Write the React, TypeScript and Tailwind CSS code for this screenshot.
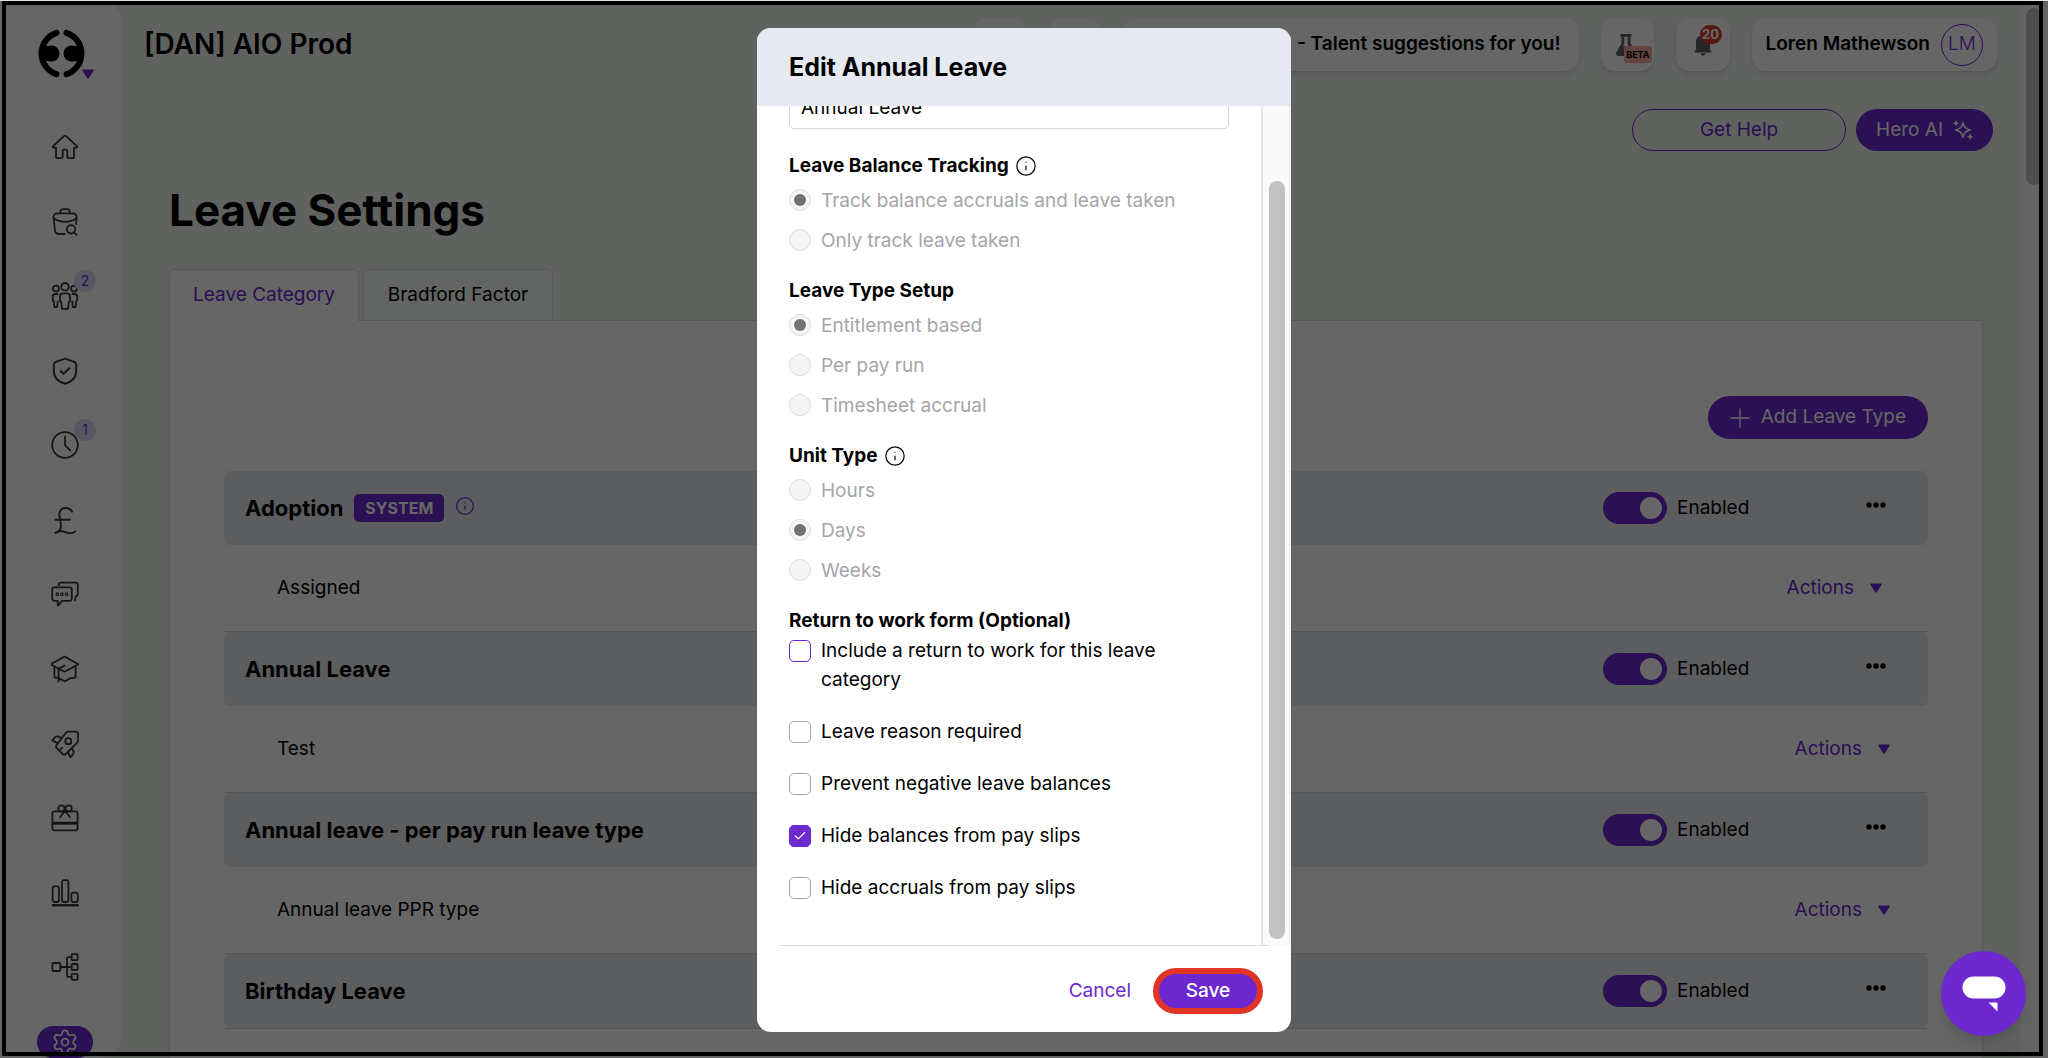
import type { ReactNode } from "react";
import { Check, Info, Settings } from "lucide-react";

const Icon = ({ children }: { children: ReactNode }) => (
  <svg
    className="h-7 w-7"
    viewBox="0 0 28 28"
    fill="none"
    stroke="currentColor"
    strokeWidth="1.8"
    strokeLinecap="round"
    strokeLinejoin="round"
    aria-hidden="true"
  >
    {children}
  </svg>
);

const navItems: { label: string; badge?: string; icon: ReactNode }[] = [
  {
    label: "Home",
    icon: (
      <path d="M13 3.2 2.2 13c-.7.7-.3 1.7.6 1.7H5v8.7c0 1 .7 1.7 1.7 1.7h3.6c.8 0 1.4-.6 1.4-1.4v-5.3c0-1 .7-1.7 1.6-1.7h1.4c.9 0 1.6.7 1.6 1.7v5.3c0 .8.6 1.4 1.4 1.4h3.6c1 0 1.7-.7 1.7-1.7v-8.7h2.2c.9 0 1.3-1 .6-1.7L15 3.2a1.5 1.5 0 0 0-2 0z" />
    ),
  },
  {
    label: "Hiring",
    icon: (
      <>
        <path d="M9.5 5.4V3.6c0-1.4 1-2.4 2.4-2.4h4.4c1.4 0 2.4 1 2.4 2.4v1.8" />
        <path d="M13.5 26H7.8c-2.2 0-3.6-1.4-3.8-3.6L2.6 9.7C2.4 7 3.8 5.4 6.4 5.4h15.4c2.6 0 4 1.6 3.8 4.3L25 16" />
        <path d="M2.8 10.6c6.6 4.4 16 4.4 22.6 0" />
        <circle cx="20" cy="21.3" r="4.2" />
        <path d="m23 24.4 2.6 2.4" />
      </>
    ),
  },
  {
    label: "People",
    badge: "2",
    icon: (
      <>
        <circle cx="14" cy="4.8" r="3.8" />
        <circle cx="5" cy="6.6" r="3" />
        <circle cx="23" cy="6.6" r="3" />
        <path d="M11 26.8 10.2 20 9 19v-4.4c0-2 1.4-3.2 3.2-3.2h3.6c1.8 0 3.2 1.2 3.2 3.2V19l-1.2 1-.8 6.8z" />
        <path d="M6.5 12H4.4c-1.7 0-2.7 1-2.7 2.6l.1 3.600 1 1.200.6 5.600h2.800l.6-5.600" />
        <path d="M21.500 12h2.100c1.700 0 2.700 1 2.700 2.600l-.1 3.600-1 1.200-.6 5.600h-2.800l-.6-5.600" />
      </>
    ),
  },
  {
    label: "Compliance",
    icon: (
      <g strokeWidth="2">
        <path d="M14 1.600 22.600 4.600c1.600.6 2.600 1.800 2.600 3.400v6c0 6.400-4.600 10.800-11.200 12.800C7.400 24.800 2.800 20.400 2.800 14V8c0-1.600 1-2.800 2.600-3.400z" />
        <path d="m9.600 14 3 2.800 5.800-5.600" />
      </g>
    ),
  },
  {
    label: "Time",
    badge: "1",
    icon: (
      <>
        <circle cx="14" cy="14" r="12.800" />
        <path d="M14 5.500V14l5.200 5.400" />
      </>
    ),
  },
  {
    label: "Payroll",
    icon: (
      <path
        strokeWidth="1.900"
        d="M21 5.600c-1.400-2.400-3.600-3.600-6.400-3.600-4.200 0-6.800 3-6.200 7.200l1.400 8.600c.5 3.200-.6 6.400-3.400 8.200-1 .7-1.600.8-2 .6 4.800-2 6.800-1.400 10.600-.2 3.800 1.200 7 1 9.200-1M4.400 13.800h14.400"
      />
    ),
  },
  {
    label: "Messages",
    icon: (
      <>
        <path d="M3.400 7.400h15.200c1.300 0 2.200.9 2.200 2.200v9c0 1.300-.9 2.200-2.200 2.200H11l-4.200 4.800v-4.800H3.400c-1.300 0-2.200-.9-2.200-2.200v-9c0-1.300.9-2.200 2.200-2.200z" />
        <path d="M7.800 5.400V4.600c0-1.200.9-2 2-2h15c1.200 0 2 .9 2 2v9.200c0 1.200-.8 2.200-2 2.400l-.9 4.200" />
        <circle cx="6.400" cy="14.200" r="1.300" strokeWidth="1.200" />
        <circle cx="11" cy="14.200" r="1.300" strokeWidth="1.200" />
        <circle cx="15.600" cy="14.200" r="1.300" strokeWidth="1.200" />
      </>
    ),
  },
  {
    label: "Learning",
    icon: (
      <>
        <path d="M13.600 1.600 27.400 9.200 13.600 16.800-.4 9.200z" />
        <path d="M3.400 12v10.400l4 .6M7.400 23l6.400 3.400 4.800-3 6-.8V12M13.600 10.600l-6 3V26.400" />
      </>
    ),
  },
  {
    label: "Goals",
    icon: (
      <>
        <path d="M17 1.700h7.600c1.500 0 2.400.9 2.400 2.400v6.400c0 1-.3 1.700-1 2.400L14.800 24c-1 1-2.200 1-3.200 0L6 18.400c-1.200-1.200-1.200-2.600-.2-3.800L15 2.800c.5-.7 1.200-1.100 2-1.100z" />
        <path d="M10.400 8.200C7.600 5.800 5 5.800 3.600 7.600L1.400 10.400l5 2.600" />
        <path d="M21 18.400c1.800 2.200 2 4.400.8 6L19.400 27.400 16.800 22" />
        <circle cx="17.300" cy="11.200" r="3" />
        <path d="m8.600 20.200 2.600-2.600" />
      </>
    ),
  },
  {
    label: "Benefits",
    icon: (
      <>
        <rect x="1.400" y="7.400" width="25.200" height="19" rx="2.200" />
        <path strokeWidth="3" strokeLinecap="butt" d="M1.400 19.200h25.200" />
        <path d="M14 6.800 9 13.200M14 6.800l5 6.400" />
        <circle cx="10.400" cy="4.400" r="3.100" />
        <circle cx="17.600" cy="4.400" r="3.100" />
      </>
    ),
  },
  {
    label: "Reports",
    icon: (
      <>
        <rect x="1.600" y="7.400" width="6.400" height="15.600" rx="2" />
        <rect x="11" y="1.200" width="6.400" height="21.800" rx="2" />
        <rect x="20.400" y="13.600" width="6.400" height="9.400" rx="2" />
        <path strokeWidth="2.600" d="M2 26.200h24.600" />
      </>
    ),
  },
  {
    label: "Organisation",
    icon: (
      <>
        <rect x="1.400" y="10" width="8" height="8" rx="1" />
        <rect x="20.600" y="1.200" width="6" height="6" rx="1" />
        <rect x="20.600" y="11" width="6" height="6" rx="1" />
        <rect x="20.600" y="20.800" width="6" height="6" rx="1" />
        <path d="M9.400 14h11.200M20.600 4.200H17c-.6 0-1 .4-1 1v17.600c0 .6.4 1 1 1h3.600" />
      </>
    ),
  },
];

const leaveCategories = [
  { name: "Adoption", system: true, type: "Assigned" },
  { name: "Annual Leave", system: false, type: "Test" },
  {
    name: "Annual leave - per pay run leave type",
    system: false,
    type: "Annual leave PPR type",
  },
  { name: "Birthday Leave", system: false, type: "" },
];

const radioGroups = [
  {
    name: "tracking",
    title: "Leave Balance Tracking",
    info: true,
    selected: "Track balance accruals and leave taken",
    options: ["Track balance accruals and leave taken", "Only track leave taken"],
  },
  {
    name: "setup",
    title: "Leave Type Setup",
    info: false,
    selected: "Entitlement based",
    options: ["Entitlement based", "Per pay run", "Timesheet accrual"],
  },
  {
    name: "unit",
    title: "Unit Type",
    info: true,
    selected: "Days",
    options: ["Hours", "Days", "Weeks"],
  },
];

const checkboxes = [
  { label: "Include a return to work for this leave category", highlighted: true },
  { label: "Leave reason required" },
  { label: "Prevent negative leave balances" },
  { label: "Hide balances from pay slips", checked: true },
  { label: "Hide accruals from pay slips" },
];

const Caret = () => (
  <svg className="h-[10px] w-3" viewBox="0 0 12 10" aria-hidden="true">
    <path
      d="M1 .5h10c.7 0 1 .6.6 1.200L6.800 9.200c-.4.600-1.200.600-1.600 0L.4 1.700C0 1.100.3.500 1 .500z"
      fill="#6d28d0"
    />
  </svg>
);

const Sidebar = () => (
  <aside className="flex w-[122px] shrink-0 flex-col rounded-r-[24px] bg-white">
    <button
      type="button"
      aria-label="Switch organisation"
      className="mt-[29px] ml-[37px] flex w-14 items-end"
    >
      <svg className="h-[50px] w-[50px] shrink-0" viewBox="0 0 50 50" aria-hidden="true">
        <g fill="none" stroke="#000" strokeWidth="6" strokeLinecap="round">
          <path d="M19.500 3.800a21.800 21.800 0 0 0 0 41.400" />
          <path d="M29.500 3.800a21.800 21.800 0 0 1 0 41.400" />
        </g>
        <circle cx="14.500" cy="24.500" r="8" />
        <circle cx="34.500" cy="24.500" r="8" />
        <path d="M5 12c1 4.500 4 6 9.500 4.500v16C9 31 6 32.500 5 37c-3.400-8-3.400-17 0-25zM44 12c-1 4.500-4 6-9.500 4.500v16C40 31 43 32.500 44 37c3.400-8 3.400-17 0-25z" />
      </svg>
      <span className="-ml-[5px]">
        <Caret />
      </span>
    </button>
    <nav className="mt-[52px] flex flex-1 flex-col items-center justify-between pl-2 text-[#38383a]">
      {navItems.map((item) => (
        <a
          key={item.label}
          href="#"
          aria-label={item.label}
          className="relative flex h-8 w-14 items-center justify-center"
        >
          <Icon>{item.icon}</Icon>
          {item.badge && (
            <span className="absolute -top-[10px] -right-[3px] flex h-[22px] w-[22px] items-center justify-center rounded-full bg-[#e2d8f4] text-sm text-[#6d28d0]">
              {item.badge}
            </span>
          )}
        </a>
      ))}
      <a
        href="#"
        aria-label="Settings"
        className="flex h-8 w-14 items-center justify-center rounded-full bg-[#6d28d0] text-white"
      >
        <Settings className="h-7 w-7" strokeWidth={1.5} />
      </a>
    </nav>
  </aside>
);

const TopBar = () => (
  <header className="flex items-start justify-between pr-[22px]">
    <h2 className="pt-[6px] text-[28px] leading-10 font-semibold">[DAN] AIO Prod</h2>
    <div className="flex h-[53px] gap-[22px] [&>*]:rounded-[14px] [&>*]:bg-white [&>*]:shadow-md">
      <button type="button" aria-label="Search" className="w-[53px]" />
      <button type="button" aria-label="Shortcuts" className="w-[53px]" />
      <a
        href="#"
        className="flex w-[456px] items-center justify-end pr-[18px] text-[19px] font-semibold"
      >
        - Talent suggestions for you!
      </a>
      <button
        type="button"
        aria-label="Labs"
        className="relative flex w-[53px] items-center pl-[14px]"
      >
        <svg className="h-[22px] w-[22px]" viewBox="0 0 22 22" fill="#5c5f66" aria-hidden="true">
          <path
            fillRule="evenodd"
            d="M5.500 0h11v2.800h-1v6.400l5 8.800c1 2-.2 4-2.200 4H3.700c-2 0-3.200-2-2.200-4l5-8.800V2.800h-1zM9.300 2.800V10L8 12.400h6L12.700 10V2.800z"
          />
        </svg>
        <span className="absolute right-[2px] bottom-2 rounded-[3px] bg-[#f5aa9c] px-[2px] text-[9px] leading-[17px] font-bold">
          BETA
        </span>
      </button>
      <button
        type="button"
        aria-label="Notifications"
        className="relative flex w-[54px] items-center justify-center"
      >
        <svg className="h-[22px] w-5" viewBox="0 0 20 22" fill="#5c5f66" aria-hidden="true">
          <path d="M10 0c.8 0 1.300.6 1.300 1.300C15 2 17 4.800 17 8v7.500c0 .7 1 1 1.200 1.600v1.400H1.800v-1.400C2 16.500 3 16.200 3 15.500V8c0-3.200 2-6 5.700-6.700C8.700.6 9.200 0 10 0zM7.600 19.300h4.800a2.400 2.400 0 0 1-4.800 0z" />
        </svg>
        <span className="absolute top-[7px] right-2 flex h-[19px] w-[22px] items-center justify-center rounded-full bg-[#d9412a] text-[13px] font-bold text-white">
          20
        </span>
      </button>
      <button
        type="button"
        className="flex items-center gap-[11px] px-[14px] text-[19px] font-semibold"
      >
        Loren Mathewson
        <span className="flex h-[42px] w-[42px] items-center justify-center rounded-full border border-[#6d28d0] font-light text-[#6d28d0]">
          LM
        </span>
      </button>
    </div>
  </header>
);

const LeaveCategoryRow = ({
  name,
  system,
  type,
}: {
  name: string;
  system: boolean;
  type: string;
}) => (
  <section className="border-b border-[#d0d5d8]">
    <div className="flex h-[74px] items-center rounded-md bg-[#e6e9ee] pr-[42px] pl-[21px]">
      <h3 className="text-[22px] font-bold">{name}</h3>
      {system && (
        <>
          <span className="ml-[11px] rounded-[5px] bg-[#6d28d0] px-[11px] text-base leading-7 font-bold text-white">
            SYSTEM
          </span>
          <Info className="mb-1 ml-[11px] h-5 w-5 text-[#6d28d0]" strokeWidth={1.5} />
        </>
      )}
      <label className="ml-auto flex w-[263px] items-center gap-[10px] text-[19px]">
        <input
          type="checkbox"
          role="switch"
          defaultChecked
          className="h-8 w-16 appearance-none rounded-full bg-gray-400 p-[5px] before:block before:h-[22px] before:w-[22px] before:rounded-full before:bg-white checked:bg-[#6d28d0] checked:before:ml-8"
        />
        Enabled
      </label>
      <button type="button" aria-label={`More options for ${name}`} className="mb-[6px]">
        <svg className="h-[6px] w-5" viewBox="0 0 20 6" aria-hidden="true">
          <circle cx="3" cy="3" r="2.700" />
          <circle cx="10" cy="3" r="2.700" />
          <circle cx="17" cy="3" r="2.700" />
        </svg>
      </button>
    </div>
    {type && (
      <div
        className={`flex h-[86px] items-center justify-between pl-[53px] text-[19px] ${
          system ? "pr-[46px]" : "pr-[38px]"
        }`}
      >
        <span>{type}</span>
        <button type="button" className="flex items-center gap-4 text-[#6d28d0]">
          Actions
          <Caret />
        </button>
      </div>
    )}
  </section>
);

const EditLeaveDialog = () => (
  <form
    role="dialog"
    aria-labelledby="dialog-title"
    className="flex h-full w-[534px] flex-col overflow-hidden rounded-[14px] bg-white"
  >
    <h2
      id="dialog-title"
      className="bg-[#e6e9f2] px-8 py-[23px] text-[25px] leading-8 font-bold"
    >
      Edit Annual Leave
    </h2>
    <div className="flex min-h-0 flex-1">
      <div className="flex-1 overflow-hidden px-8 text-[19px] leading-[29px]">
        <input
          type="text"
          aria-label="Leave category name"
          defaultValue="Annual Leave"
          className="-mt-[21px] block h-11 w-full rounded-[5px] border border-[#d4d4da] px-[11px]"
        />
        <div className="mt-[22px] flex flex-col gap-4">
          {radioGroups.map((group) => (
            <fieldset key={group.name} disabled>
              <legend className="flex items-center gap-[6px] font-bold">
                {group.title}
                {group.info && <Info className="h-[22px] w-[22px]" strokeWidth={1.3} />}
              </legend>
              {group.options.map((option) => (
                <label
                  key={option}
                  className="flex h-10 items-center gap-[10px] text-[#a5a5ab]"
                >
                  <input
                    type="radio"
                    name={group.name}
                    defaultChecked={option === group.selected}
                    className="flex h-[22px] w-[22px] appearance-none items-center justify-center rounded-full border border-[#dcdcde] bg-[#f5f5f5] checked:before:h-3 checked:before:w-3 checked:before:rounded-full checked:before:bg-[#717175]"
                  />
                  {option}
                </label>
              ))}
            </fieldset>
          ))}
          <fieldset>
            <legend className="font-bold">Return to work form (Optional)</legend>
            <div className="flex flex-col gap-[23px] pt-px">
              {checkboxes.map((box) => (
                <label key={box.label} className="flex gap-[10px]">
                  <span className="relative mt-1 h-[22px] w-[22px] shrink-0">
                    <input
                      type="checkbox"
                      defaultChecked={box.checked}
                      className={`peer block h-full w-full appearance-none rounded-[5px] border bg-white checked:border-[#6d28d0] checked:bg-[#6d28d0] ${
                        box.highlighted ? "border-[#6d28d0]" : "border-[#a3a3aa]"
                      }`}
                    />
                    <Check
                      className="pointer-events-none absolute inset-[4px] hidden h-[14px] w-[14px] text-white peer-checked:block"
                      strokeWidth={2}
                    />
                  </span>
                  {box.label}
                </label>
              ))}
            </div>
          </fieldset>
        </div>
      </div>
      <div className="w-[30px] border-r-2 border-l-2 border-r-[#f0f0f0] border-l-[#e6e6e6] bg-[#fafafa] pt-[75px] pr-1 pb-[6px] pl-[6px]">
        <div className="h-full w-4 rounded-full bg-[#c1c1c1]" />
      </div>
    </div>
    <div className="mx-[22px] flex h-[87px] items-center justify-end border-t border-[#dcdce0] pt-1 pr-[6px]">
      <button type="button" className="px-[22px] text-[19px] text-[#6d28d0]">
        Cancel
      </button>
      <button
        type="submit"
        className="h-[46px] w-[110px] rounded-full border-[6px] border-[#e03524] bg-[#6d28d0] text-[19px] font-medium text-white"
      >
        Save
      </button>
    </div>
  </form>
);

const App = () => {
  return (
    <div className="relative h-screen overflow-hidden bg-[#f0f5f1] font-['Inter',sans-serif] text-black">
      <div className="flex h-full">
        <Sidebar />
        <div className="min-w-0 flex-1 pt-[18px] pl-[22px]">
          <TopBar />
          <main className="pr-9 pl-[25px]">
            <div className="mt-[38px] -mr-[10px] flex justify-end gap-[10px] text-[19px]">
              <button
                type="button"
                className="h-[42px] w-[214px] rounded-full border border-[#6d28d0] text-[#6d28d0]"
              >
                Get Help
              </button>
              <button
                type="button"
                className="flex h-[42px] items-center gap-[10px] rounded-full bg-[#6d28d0] px-5 text-white"
              >
                Hero AI
                <svg
                  className="h-5 w-5"
                  viewBox="0 0 20 20"
                  fill="none"
                  stroke="currentColor"
                  strokeWidth="1.500"
                  strokeLinecap="round"
                  strokeLinejoin="round"
                  aria-hidden="true"
                >
                  <path d="M10 2.500c.7 4.500 2.500 6.700 7.500 7.500-5 .8-6.800 3-7.500 7.500-.7-4.500-2.500-6.700-7.500-7.500 5-.8 6.800-3 7.500-7.500zM3 1.200v4M1 3.200h4M17 14.800v4M15 16.800h4" />
                </svg>
              </button>
            </div>
            <h1 className="mt-8 text-[44px] leading-[54px] font-bold">Leave Settings</h1>
            <div className="relative -mb-px mt-8 flex gap-1 text-[19px]">
              <button
                type="button"
                className="h-[52px] w-[190px] rounded-t-md border border-b-0 border-[#d5dbd8] bg-white text-[#6d28d0]"
              >
                Leave Category
              </button>
              <button
                type="button"
                className="h-[52px] w-[190px] rounded-t-md border border-[#d5dbd8] bg-[#f8faf9]"
              >
                Bradford Factor
              </button>
            </div>
            <div className="border border-[#d5dbd8] bg-white px-[54px] pt-[75px] pb-16">
              <div className="flex justify-end">
                <button
                  type="button"
                  className="flex h-[43px] items-center gap-[11px] rounded-full bg-[#6d28d0] px-[22px] text-[19px] text-white"
                >
                  <svg
                    className="h-5 w-5"
                    viewBox="0 0 20 20"
                    stroke="currentColor"
                    strokeWidth="1.300"
                    strokeLinecap="round"
                    aria-hidden="true"
                  >
                    <path d="M10 .8v18.400M.8 10h18.400" />
                  </svg>
                  Add Leave Type
                </button>
              </div>
              <div className="mt-8">
                {leaveCategories.map((category) => (
                  <LeaveCategoryRow key={category.name} {...category} />
                ))}
              </div>
            </div>
          </main>
        </div>
        <div className="w-[29px] shrink-0 border-l border-[#ececec] bg-[#fafafa] pt-2 pl-[6px]">
          <div className="h-[177px] w-4 rounded-full bg-[#c1c1c1]" />
        </div>
      </div>

      <div className="absolute inset-0 flex justify-center bg-black/60 pt-7 pb-[26px]">
        <EditLeaveDialog />
      </div>

      <button
        type="button"
        aria-label="Open chat"
        className="absolute right-[22px] bottom-[22px] flex h-[85px] w-[85px] items-center justify-center rounded-full bg-[#6d28d0] shadow-lg"
      >
        <svg className="h-9 w-11" viewBox="0 0 44 36" fill="#fff" aria-hidden="true">
          <rect x="0.500" y="0.500" width="43" height="22" rx="11" />
          <path d="M26.500 26.500h9V35.500z" />
        </svg>
      </button>

      <div className="pointer-events-none absolute inset-x-0 top-0 h-px bg-[#dfe6e1]" />
      <div className="pointer-events-none absolute top-px right-[5px] bottom-[2px] left-[2px] border-4 border-black" />
    </div>
  );
};

export default App;
